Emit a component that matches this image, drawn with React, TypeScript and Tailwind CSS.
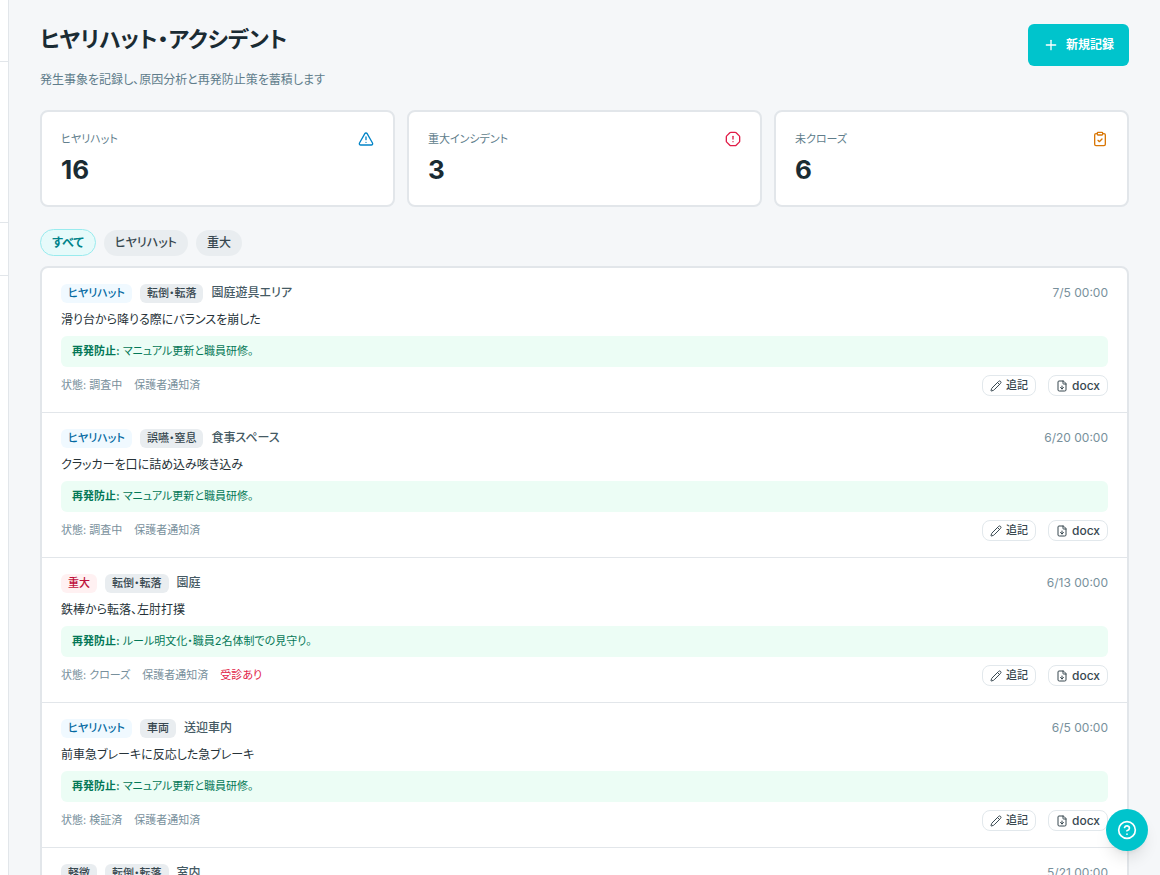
import type { LucideIcon } from "lucide-react";
import {
  CircleHelp,
  ClipboardCheck,
  FileDown,
  OctagonAlert,
  Pencil,
  Plus,
  TriangleAlert,
} from "lucide-react";

type Incident = {
  level: "ヒヤリハット" | "重大" | "軽微";
  category: string;
  place: string;
  date: string;
  summary: string;
  prevention: string;
  status: string;
  visited?: boolean;
};

const stats: { label: string; value: number; icon: LucideIcon; color: string }[] = [
  { label: "ヒヤリハット", value: 16, icon: TriangleAlert, color: "text-[#0284c7]" },
  { label: "重大インシデント", value: 3, icon: OctagonAlert, color: "text-[#e11d48]" },
  { label: "未クローズ", value: 6, icon: ClipboardCheck, color: "text-[#d97706]" },
];

const filters = ["すべて", "ヒヤリハット", "重大"];

const incidents: Incident[] = [
  {
    level: "ヒヤリハット",
    category: "転倒・転落",
    place: "園庭遊具エリア",
    date: "7/5 00:00",
    summary: "滑り台から降りる際にバランスを崩した",
    prevention: "マニュアル更新と職員研修。",
    status: "調査中",
  },
  {
    level: "ヒヤリハット",
    category: "誤嚥・窒息",
    place: "食事スペース",
    date: "6/20 00:00",
    summary: "クラッカーを口に詰め込み咳き込み",
    prevention: "マニュアル更新と職員研修。",
    status: "調査中",
  },
  {
    level: "重大",
    category: "転倒・転落",
    place: "園庭",
    date: "6/13 00:00",
    summary: "鉄棒から転落、左肘打撲",
    prevention: "ルール明文化・職員2名体制での見守り。",
    status: "クローズ",
    visited: true,
  },
  {
    level: "ヒヤリハット",
    category: "車両",
    place: "送迎車内",
    date: "6/5 00:00",
    summary: "前車急ブレーキに反応した急ブレーキ",
    prevention: "マニュアル更新と職員研修。",
    status: "検証済",
  },
  {
    level: "軽微",
    category: "転倒・転落",
    place: "室内",
    date: "5/21 00:00",
    summary: "",
    prevention: "",
    status: "",
  },
];

const levelStyle = {
  ヒヤリハット: "bg-[#f0f9ff] text-[#0369a1]",
  重大: "bg-[#fff1f2] text-[#be123c]",
  軽微: "bg-[#e9edf0] text-[#37474f]",
};

function Badge({ className, children }: { className: string; children: string }) {
  return (
    <span className={`rounded-md px-[7px] text-[11px] leading-[19px] font-medium ${className}`}>
      {children}
    </span>
  );
}

function SmallButton({ icon: Icon, label }: { icon: LucideIcon; label: string }) {
  return (
    <button
      type="button"
      className="flex h-[21px] items-center gap-1 rounded-lg border border-[#e2e8ec] bg-white px-[7px] text-[11px] font-medium text-[#37474f] [&:lang(en)]:text-[12px]"
      lang={/^[a-z]+$/.test(label) ? "en" : "ja"}
    >
      <Icon className="size-3" aria-hidden="true" />
      {label}
    </button>
  );
}

function IncidentRow({ item }: { item: Incident }) {
  return (
    <li className="border-b border-[#e2e6ea] px-[19px] pt-[15px] pb-4 last:border-b-0">
      <div className="flex items-center gap-2">
        <Badge className={levelStyle[item.level]}>{item.level}</Badge>
        <Badge className="bg-[#e9edf0] text-[#37474f]">{item.category}</Badge>
        <span className="text-[12px] leading-5 font-medium text-[#455a64]">{item.place}</span>
        <time className="ml-auto text-[12px] leading-5 text-[#78909c]">{item.date}</time>
      </div>
      {item.summary && (
        <p className="mt-[7px] text-[12px] leading-5 text-[#263238]">{item.summary}</p>
      )}
      {item.prevention && (
        <p className="mt-[6px] rounded-md bg-[#ecfdf5] px-[11px] py-[6px] text-[11px] leading-[19px] text-[#047857]">
          <strong className="font-bold">再発防止:</strong> {item.prevention}
        </p>
      )}
      {item.status && (
        <div className="mt-2 flex items-center gap-3 text-[11px] text-[#78909c]">
          <span>状態: {item.status}</span>
          <span>保護者通知済</span>
          {item.visited && <span className="text-[#e11d48]">受診あり</span>}
          <div className="ml-auto flex gap-3">
            <SmallButton icon={Pencil} label="追記" />
            <SmallButton icon={FileDown} label="docx" />
          </div>
        </div>
      )}
    </li>
  );
}

export default function App() {
  return (
    <div className="flex h-screen overflow-hidden bg-[#f5f7f9] font-['Inter','Noto_Sans_CJK_JP',sans-serif] text-[#1a2b33] [font-feature-settings:'palt']">
      <aside className="flex w-[9px] shrink-0 flex-col border-r border-[#e2e6ea] bg-white">
        <div className="h-[62px] border-b border-[#e2e6ea]" />
        <div className="h-[161px] border-b border-[#e2e6ea]" />
        <div className="h-[53px] border-b border-[#e2e6ea]" />
      </aside>

      <main className="min-w-0 flex-1 px-[31px] pt-6">
        <header className="flex items-start justify-between">
          <div>
            <h1 className="text-[22px] leading-[30px] font-bold">ヒヤリハット・アクシデント</h1>
            <p className="mt-4 text-[12px] leading-5 text-[#607d8b]">
              発生事象を記録し、原因分析と再発防止策を蓄積します
            </p>
          </div>
          <button
            type="button"
            className="flex h-[42px] items-center gap-[7px] rounded-md bg-[#00c4cc] px-[15px] text-[12px] font-semibold text-white"
          >
            <Plus className="size-4" aria-hidden="true" />
            新規記録
          </button>
        </header>

        <section className="mt-5 grid grid-cols-3 gap-3">
          {stats.map(({ label, value, icon: Icon, color }) => (
            <div
              key={label}
              className="h-[97px] rounded-lg border-2 border-[#e2e6ea] bg-white px-[19px] pt-[17px]"
            >
              <div className="flex items-center justify-between">
                <span className="text-[11px] leading-5 text-[#607d8b]">{label}</span>
                <Icon className={`size-4 ${color}`} aria-hidden="true" />
              </div>
              <p className="mt-1 text-[26px] leading-[34px] font-bold">{value}</p>
            </div>
          ))}
        </section>

        <nav className="mt-[22px] flex items-center gap-2">
          {filters.map((label, i) => (
            <button
              key={label}
              type="button"
              aria-pressed={i === 0}
              className={
                i === 0
                  ? "h-[27px] rounded-full border border-[#99ebee] bg-[#e6fafa] px-[11px] text-[12px] font-semibold text-[#00838a]"
                  : "h-[26px] rounded-full bg-[#e9edf0] px-[11px] text-[12px] font-medium text-[#37474f]"
              }
            >
              {label}
            </button>
          ))}
        </nav>

        <ul className="mt-[10px] rounded-lg border-2 border-[#e2e6ea] bg-white">
          {incidents.map((item) => (
            <IncidentRow key={item.date} item={item} />
          ))}
        </ul>
      </main>

      <button
        type="button"
        aria-label="ヘルプ"
        className="fixed right-3 bottom-6 flex size-[42px] items-center justify-center rounded-full bg-[#00c4cc] text-white shadow-lg"
      >
        <CircleHelp className="size-5" aria-hidden="true" />
      </button>
    </div>
  );
}
